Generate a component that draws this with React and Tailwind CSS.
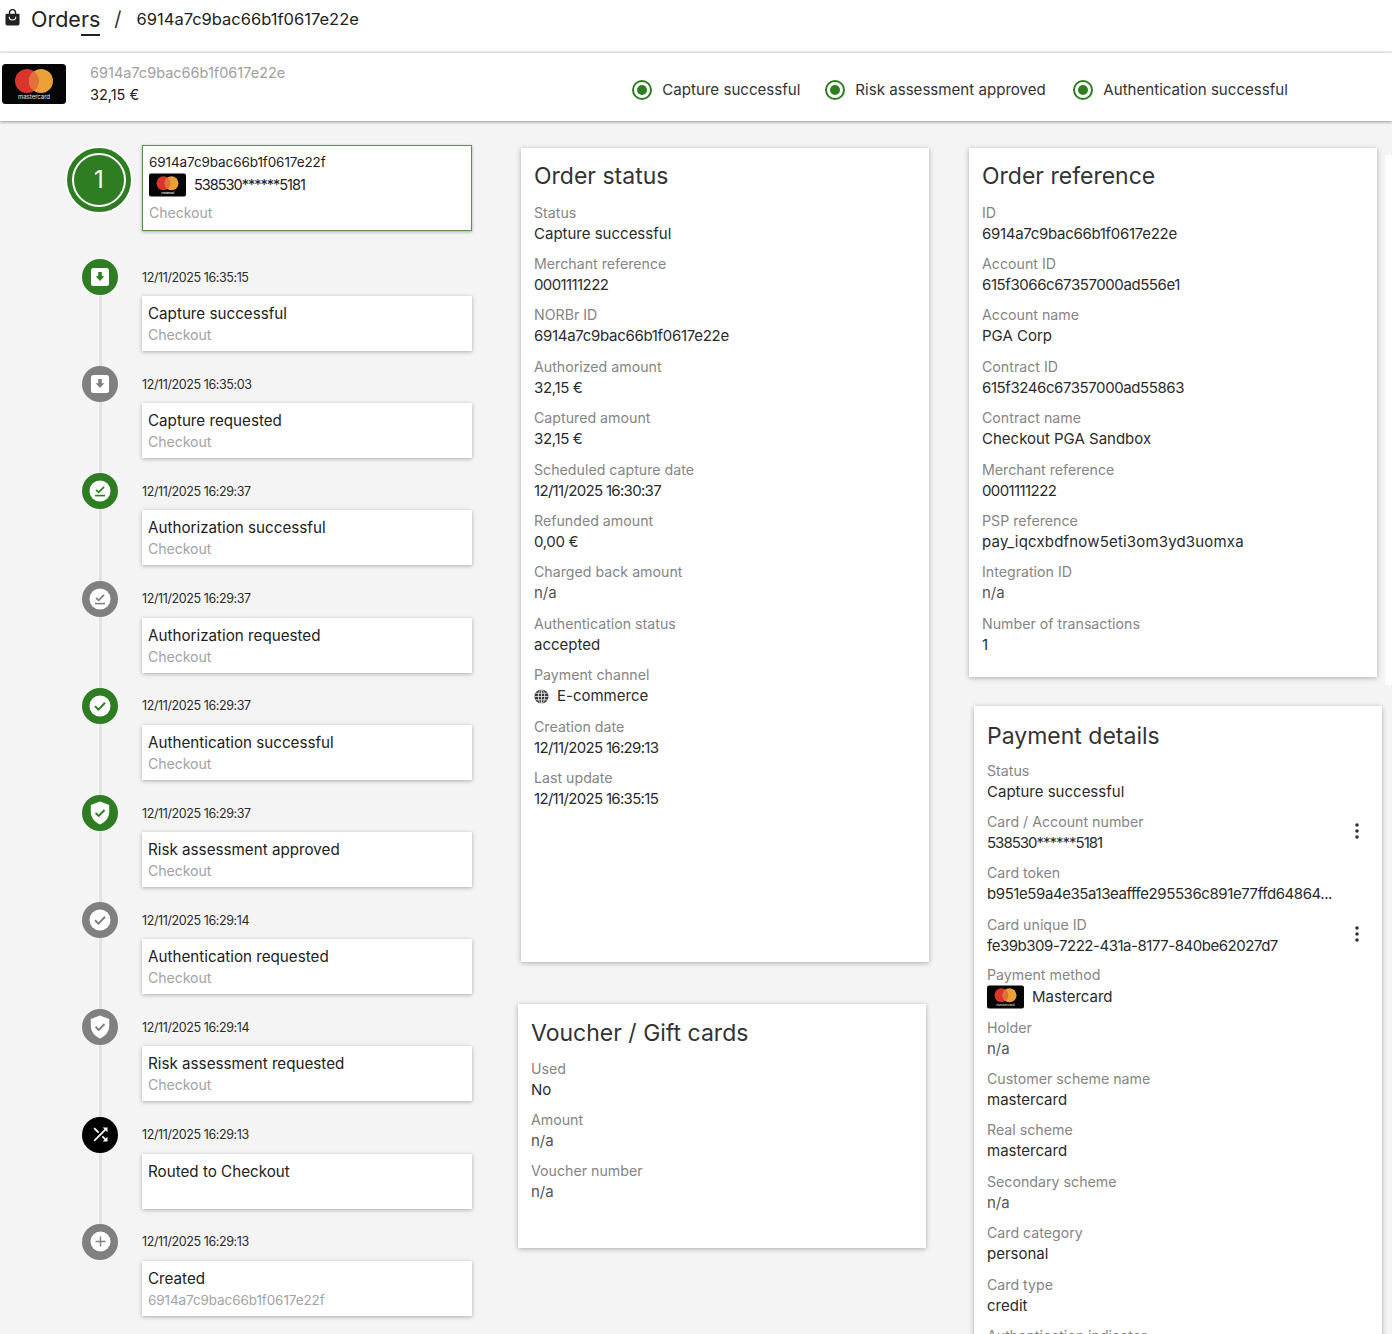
const FONT = "font-['Inter','Liberation_Sans',sans-serif]"

// tracking per kind of value, the digits run narrower in the reference
const HASH = 'tracking-[-0.3px]'
const ACC = 'tracking-[-0.42px]'
const DATE = 'tracking-[-0.68px]'
const MASK = 'tracking-[-1px]'
const REF = 'tracking-[-0.6px]'
const AMOUNT = 'tracking-[-0.35px]'

function CardLogo({ className }) {
  return (
    <svg viewBox="0 0 64 40" className={className}>
      <rect width="64" height="40" rx="3.5" fill="#050505" />
      <circle cx="25" cy="17" r="12" fill="#d9352c" />
      <circle cx="39" cy="17" r="12" fill="#ec9f35" />
      <path d="M32 7.2a12 12 0 0 1 0 19.6a12 12 0 0 1 0-19.6z" fill="#e2703a" />
      <text x="32" y="35" textAnchor="middle" fontSize="6" fill="#e8e8e8" fontFamily="Inter, sans-serif">mastercard</text>
    </svg>
  )
}

function BagIcon() {
  return (
    <svg viewBox="0 0 16 18" className="w-[15px] h-[17px]">
      <path d="M1.5 5h13a1 1 0 0 1 1 1v9.5a2 2 0 0 1-2 2h-11a2 2 0 0 1-2-2V6a1 1 0 0 1 1-1z" fill="#222" />
      <path d="M4.8 6V3.8a3.2 3.2 0 0 1 6.4 0V6" fill="none" stroke="#222" strokeWidth="1.5" />
      <path d="M4.5 8.2a3.5 3.5 0 0 0 7 0" fill="none" stroke="#fff" strokeWidth="1.2" />
    </svg>
  )
}

function GlobeIcon() {
  return (
    <svg viewBox="0 0 16 16" className="w-[15px] h-[15px]">
      <circle cx="8" cy="8" r="7.5" fill="#3a3a3a" />
      <g fill="none" stroke="#fff" strokeWidth="0.8">
        <ellipse cx="8" cy="8" rx="3.4" ry="7.4" />
        <path d="M8 .6v14.800M.6 8h14.800M1.600 4.500h12.800M1.600 11.500h12.800" />
      </g>
    </svg>
  )
}

function EventIcon({ kind, color }) {
  const stroke = color
  if (kind === 'capture') {
    return (
      <svg viewBox="0 0 20 20" className="w-[20px] h-[20px]">
        <rect x="1" y="1" width="18" height="18" rx="2.5" fill="#fff" />
        <path d="M8.2 5h3.6v4.2h2.6L10 14 5.6 9.2h2.6z" fill={stroke} />
      </svg>
    )
  }
  if (kind === 'auth') {
    return (
      <svg viewBox="0 0 22 22" className="w-[22px] h-[22px]">
        <circle cx="11" cy="11" r="10.5" fill="#fff" />
        <path d="M7 9.800l2.700 2.600L15 6.800" fill="none" stroke={stroke} strokeWidth="1.700" />
        <path d="M6 15.600h10" stroke={stroke} strokeWidth="1.600" />
      </svg>
    )
  }
  if (kind === 'check') {
    return (
      <svg viewBox="0 0 22 22" className="w-[22px] h-[22px]">
        <circle cx="11" cy="11" r="10.500" fill="#fff" />
        <path d="M6 11.200l3.500 3.400L16 7.800" fill="none" stroke={stroke} strokeWidth="2" />
      </svg>
    )
  }
  if (kind === 'shield') {
    return (
      <svg viewBox="0 0 20 24" className="w-[20px] h-[24px]">
        <path d="M10 .5l9.200 3.600v7c0 5.600-3.800 10.300-9.200 12.400C4.600 21.400.8 16.700.8 11.100v-7z" fill="#fff" />
        <path d="M5.600 12l3.100 3 5.800-6" fill="none" stroke={stroke} strokeWidth="1.900" />
      </svg>
    )
  }
  if (kind === 'plus') {
    return (
      <svg viewBox="0 0 22 22" className="w-[21px] h-[21px]">
        <circle cx="11" cy="11" r="10.500" fill="#fff" />
        <path d="M11 5.800v10.400M5.800 11h10.400" stroke={stroke} strokeWidth="1.500" />
      </svg>
    )
  }
  return (
    <svg viewBox="0 0 24 24" className="w-[21px] h-[21px]" fill="#fff">
      <path d="M10.590 9.170L5.410 4 4 5.410l5.170 5.170 1.420-1.410zM14.500 4l2.040 2.040L4 18.590 5.410 20 17.960 7.460 20 9.500V4h-5.500zm.33 9.410l-1.410 1.410 3.130 3.130L14.500 20H20v-5.500l-2.040 2.040-3.130-3.130z" />
    </svg>
  )
}

const EVENTS = [
  { time: '12/11/2025 16:35:15', title: 'Capture successful', sub: 'Checkout', icon: 'capture', color: '#2f7d22' },
  { time: '12/11/2025 16:35:03', title: 'Capture requested', sub: 'Checkout', icon: 'capture', color: '#808080' },
  { time: '12/11/2025 16:29:37', title: 'Authorization successful', sub: 'Checkout', icon: 'auth', color: '#2f7d22' },
  { time: '12/11/2025 16:29:37', title: 'Authorization requested', sub: 'Checkout', icon: 'auth', color: '#808080' },
  { time: '12/11/2025 16:29:37', title: 'Authentication successful', sub: 'Checkout', icon: 'check', color: '#2f7d22' },
  { time: '12/11/2025 16:29:37', title: 'Risk assessment approved', sub: 'Checkout', icon: 'shield', color: '#2f7d22' },
  { time: '12/11/2025 16:29:14', title: 'Authentication requested', sub: 'Checkout', icon: 'check', color: '#808080' },
  { time: '12/11/2025 16:29:14', title: 'Risk assessment requested', sub: 'Checkout', icon: 'shield', color: '#808080' },
  { time: '12/11/2025 16:29:13', title: 'Routed to Checkout', sub: '', icon: 'shuffle', color: '#000000' },
  { time: '12/11/2025 16:29:13', title: 'Created', sub: '6914a7c9bac66b1f0617e22f', icon: 'plus', color: '#808080', last: true },
]

function TimelineRow({ ev }) {
  return (
    <div className="flex h-[107.2px]">
      <div className="w-[36px] ml-[15px] flex flex-col items-center shrink-0">
        <div
          className="w-[36px] h-[36px] rounded-full flex items-center justify-center shrink-0"
          style={{ backgroundColor: ev.color }}
        >
          <EventIcon kind={ev.icon} color={ev.color} />
        </div>
        {!ev.last && <div className="w-[3px] flex-1 bg-[#e2e2e2]" />}
      </div>
      <div className="ml-[24px] w-[330px]">
        <div className="h-[37px] pt-[1px] flex items-center text-[12.5px] tracking-[-0.4px] text-[#2b2b2b]">{ev.time}</div>
        <div className="h-[55px] bg-white shadow-[0_1px_4px_rgba(0,0,0,0.3)] px-[6px] pt-[7px]">
          <div className="text-[15.2px] leading-[21px] text-[#222]">{ev.title}</div>
          <div className={`leading-[22px] text-[#a3a3a3] tracking-[-0.1px] ${ev.last ? 'text-[13.5px]' : 'text-[14.2px]'}`}>{ev.sub}</div>
        </div>
      </div>
    </div>
  )
}

function Field({ label, children, menu, dim, t = '' }) {
  return (
    <div className="h-[51.4px] flex items-center justify-between">
      <div className="min-w-0">
        <div className="text-[14.2px] leading-[20px] text-[#858585]">{label}</div>
        <div className={`text-[15px] leading-[22px] whitespace-nowrap ${t} ${dim ? 'text-[#555]' : 'text-[#2b2b2b]'}`}>{children}</div>
      </div>
      {menu && (
        <svg viewBox="0 0 4 16" className="w-[4px] h-[16px] mr-[23px] -mt-[4px] shrink-0" fill="#333">
          <circle cx="2" cy="2" r="1.800" />
          <circle cx="2" cy="8" r="1.800" />
          <circle cx="2" cy="14" r="1.800" />
        </svg>
      )}
    </div>
  )
}

function Card({ title, className, head = 'pt-[11px]', children }) {
  return (
    <section className={`w-[408px] bg-white shadow-[0_1px_5px_rgba(0,0,0,0.3)] ${className}`}>
      <h2 className={`h-[50px] pl-[13px] text-[23px] leading-[34px] text-[#333] whitespace-nowrap ${head}`}>{title}</h2>
      <div className="pl-[13px]">{children}</div>
    </section>
  )
}

export default function App() {
  return (
    <div className={`h-[1334px] overflow-hidden bg-[#f4f4f4] ${FONT}`}>
      {/* Breadcrumb */}
      <header className="h-[53px] bg-white border-b-2 border-[#efefef] flex items-start pl-[5px] pt-[7px]">
        <div className="mt-[2px]"><BagIcon /></div>
        <div className="ml-[11px] text-[21.5px] leading-[24px] text-[#222]">
          Orde<span className="border-b-2 border-[#222] pb-[2px]">rs</span>
        </div>
        <div className="ml-[14px] text-[20px] leading-[24px] text-[#333]">/</div>
        <div className="ml-[15px] text-[16.5px] leading-[24px] text-[#222]">6914a7c9bac66b1f0617e22e</div>
      </header>

      {/* Order bar */}
      <div className="h-[68px] bg-white shadow-[0_1px_3px_rgba(0,0,0,0.4)] relative flex items-center">
        <CardLogo className="w-[64px] h-[40px] ml-[2px] -mt-[6px]" />
        <div className="ml-[24px] -mt-[6px]">
          <div className="text-[14.5px] leading-[22px] text-[#a0a0a0]">6914a7c9bac66b1f0617e22e</div>
          <div className="text-[14.5px] leading-[22px] text-[#222]">32,15 €</div>
        </div>
        <div className="ml-[347px] flex text-[15.1px] text-[#333] mt-[6px]">
          {[
            ['Capture successful', 'w-[193px]'],
            ['Risk assessment approved', 'w-[248px]'],
            ['Authentication successful', 'w-[230px]'],
          ].map(([label, w]) => (
            <div key={label} className={`flex items-center gap-[10px] ${w}`}>
              <span className="w-[20px] h-[20px] rounded-full border-2 border-[#2f7d22] flex items-center justify-center shrink-0">
                <span className="w-[10px] h-[10px] rounded-full bg-[#2f7d22]" />
              </span>
              {label}
            </div>
          ))}
        </div>
      </div>

      <main className="flex">
        {/* Timeline */}
        <div className="w-[521px] shrink-0 pl-[67px] pt-[24px]">
          <div className="flex h-[114px]">
            <div className="w-[64px] h-[64px] mt-[3px] rounded-full bg-[#2f7d22] border-2 border-[#2f7d22] ring-2 ring-white flex items-center justify-center shrink-0">
              <div className="w-[54px] h-[54px] rounded-full border-2 border-white flex items-center justify-center text-white text-[24px]">1</div>
            </div>
            <div className="ml-[11px] w-[330px] h-[86px] bg-white border border-[#5c9150] shadow-[0_1px_3px_rgba(0,0,0,0.3)] px-[6px] pt-[6px]">
              <div className="text-[13.5px] leading-[21px] tracking-[-0.1px] text-[#222]">6914a7c9bac66b1f0617e22f</div>
              <div className={`flex items-center gap-[8px] text-[14.5px] text-[#222] ${MASK}`}>
                <CardLogo className="w-[37px] h-[24px]" />
                538530******5181
              </div>
              <div className="text-[14.2px] leading-[20px] mt-[6px] text-[#a3a3a3] tracking-[-0.1px]">Checkout</div>
            </div>
          </div>
          {EVENTS.map((ev) => <TimelineRow key={ev.title} ev={ev} />)}
        </div>

        {/* Middle column */}
        <div className="w-[448px] shrink-0 pt-[27px]">
          <Card title="Order status" className="h-[814px]">
            <Field label="Status">Capture successful</Field>
            <Field label="Merchant reference" t={REF}>0001111222</Field>
            <Field label="NORBr ID" t={HASH}>6914a7c9bac66b1f0617e22e</Field>
            <Field label="Authorized amount" t={AMOUNT}>32,15 €</Field>
            <Field label="Captured amount" t={AMOUNT}>32,15 €</Field>
            <Field label="Scheduled capture date" t={DATE}>12/11/2025 16:30:37</Field>
            <Field label="Refunded amount" t={AMOUNT}>0,00 €</Field>
            <Field label="Charged back amount" dim>n/a</Field>
            <Field label="Authentication status">accepted</Field>
            <Field label="Payment channel">
              <span className="flex items-center gap-[8px]"><GlobeIcon />E-commerce</span>
            </Field>
            <Field label="Creation date" t={DATE}>12/11/2025 16:29:13</Field>
            <Field label="Last update" t={DATE}>12/11/2025 16:35:15</Field>
          </Card>
          <Card title="Voucher / Gift cards" head="pt-[12px]" className="h-[244px] mt-[42px] -ml-[3px]">
            <Field label="Used">No</Field>
            <Field label="Amount" dim>n/a</Field>
            <Field label="Voucher number" dim>n/a</Field>
          </Card>
        </div>

        {/* Right column */}
        <div className="flex-1 pt-[27px] relative">
          <div className="absolute left-[416px] top-[34px] w-[10px] h-[530px] bg-white" />
          <Card title="Order reference" className="h-[529px] relative">
            <Field label="ID" t={HASH}>6914a7c9bac66b1f0617e22e</Field>
            <Field label="Account ID" t={ACC}>615f3066c67357000ad556e1</Field>
            <Field label="Account name">PGA Corp</Field>
            <Field label="Contract ID" t={ACC}>615f3246c67357000ad55863</Field>
            <Field label="Contract name">Checkout PGA Sandbox</Field>
            <Field label="Merchant reference" t={REF}>0001111222</Field>
            <Field label="PSP reference" t="tracking-[0.18px]">pay_iqcxbdfnow5eti3om3yd3uomxa</Field>
            <Field label="Integration ID" dim>n/a</Field>
            <Field label="Number of transactions">1</Field>
          </Card>
          <Card title="Payment details" head="pt-[13px]" className="h-[700px] mt-[29px] ml-[5px] relative">
            <Field label="Status">Capture successful</Field>
            <Field label="Card / Account number" menu t={MASK}>538530******5181</Field>
            <Field label="Card token" t={ACC}>b951e59a4e35a13eafffe295536c891e77ffd64864...</Field>
            <Field label="Card unique ID" menu t="tracking-[-0.47px]">fe39b309-7222-431a-8177-840be62027d7</Field>
            <Field label="Payment method">
              <span className="flex items-center gap-[8px]"><CardLogo className="w-[37px] h-[24px]" />Mastercard</span>
            </Field>
            <Field label="Holder" dim>n/a</Field>
            <Field label="Customer scheme name">mastercard</Field>
            <Field label="Real scheme">mastercard</Field>
            <Field label="Secondary scheme" dim>n/a</Field>
            <Field label="Card category">personal</Field>
            <Field label="Card type">credit</Field>
            <Field label="Authentication indicator" dim>n/a</Field>
          </Card>
        </div>
      </main>
    </div>
  )
}
